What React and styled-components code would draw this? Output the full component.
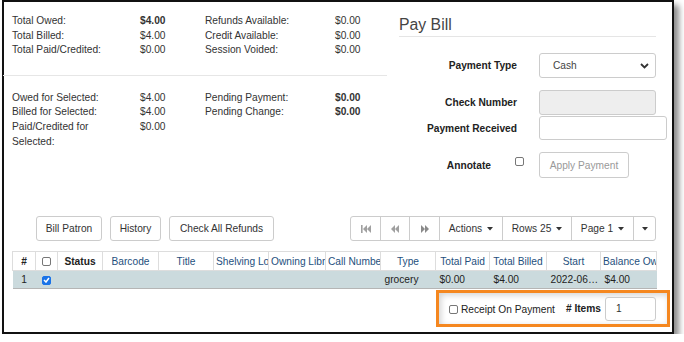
import styled, { createGlobalStyle } from "styled-components";

const GlobalStyle = createGlobalStyle`
  * {
    box-sizing: border-box;
  }
  body {
    margin: 0;
    background: #fff;
    font-family: "Liberation Sans", Arial, sans-serif;
    font-size: 10.2px;
    color: #333;
  }
`;

const Frame = styled.div`
  width: 672px;
  height: 334px;
  margin-left: 2px;
  border: 2px solid #111;
  box-shadow: 5px 5px 6px rgba(0, 0, 0, 0.45);
  background: #fff;
  overflow: visible;
`;

const Content = styled.div`
  padding: 0 16px 0 0;
`;

const TopSection = styled.div`
  display: flex;
  align-items: flex-start;
`;

const Summary = styled.div`
  width: 384px;
  padding-top: 12px;
`;

const SummaryGrid = styled.div`
  display: grid;
  grid-template-columns: 128px 65px 130px 1fr;
  padding-left: 8px;
  line-height: 14.6px;
`;

const Label = styled.div`
  padding-right: 10px;
`;

const Value = styled.div`
  font-weight: ${(p) => (p.$bold ? "bold" : "normal")};
`;

const Separator = styled.hr`
  border: 0;
  border-top: 1px solid #e6e6e6;
  margin: 17px 0 15px -1px;
`;

const PayPanel = styled.div`
  width: 257px;
  margin-left: 12px;
  padding-top: 14px;
`;

const PanelTitle = styled.h3`
  margin: 0;
  font-size: 15.8px;
  font-weight: normal;
  line-height: 17.4px;
  color: #444;
  padding-bottom: 3px;
  border-bottom: 1px solid #e5e5e5;
`;

const FormRow = styled.div`
  display: grid;
  grid-template-columns: 118px auto;
  column-gap: 22px;
  align-items: center;
  margin-top: ${(p) => p.$gap}px;
`;

const FormLabel = styled.div`
  font-weight: bold;
  text-align: right;
  color: #222;
`;

const AnnotateLabel = styled.div`
  display: flex;
  justify-content: flex-end;
  align-self: stretch;
  align-items: center;
  gap: 24px;
  margin-right: -7px;
  font-weight: bold;
  color: #222;
`;

const SelectBox = styled.div`
  width: 117px;
  height: 25px;
  display: flex;
  align-items: center;
  justify-content: space-between;
  padding: 0 6px 0 13px;
  border: 1px solid #ccc;
  border-radius: 3px;
  background: #fff;
  color: #444;
`;

const TextInput = styled.div`
  width: ${(p) => p.$w}px;
  height: ${(p) => p.$h}px;
  border: 1px solid #ccc;
  border-radius: 3px;
  background: ${(p) => (p.$disabled ? "#eee" : "#fff")};
  display: flex;
  align-items: center;
  padding-left: 10px;
  color: #555;
`;

const Check = styled.span`
  display: inline-flex;
  align-items: center;
  justify-content: center;
  width: 9px;
  height: 9px;
  flex: none;
  border: 1px solid ${(p) => (p.$checked ? "#1a73e8" : "#777")};
  border-radius: 2px;
  background: ${(p) => (p.$checked ? "#1a73e8" : "#fff")};
  align-self: ${(p) => (p.$top ? "flex-start" : "center")};
  margin-top: ${(p) => (p.$top ? "5px" : "0")};
`;

const Button = styled.button`
  height: ${(p) => p.$h || 25}px;
  padding: 0 ${(p) => p.$pad || 6}px;
  border: 1px solid #ccc;
  border-radius: 3px;
  background: #fff;
  font-family: inherit;
  font-size: 10.2px;
  color: ${(p) => (p.disabled ? "#999" : "#333")};
`;

const Toolbar = styled.div`
  display: flex;
  justify-content: space-between;
  align-items: center;
  margin-top: 38px;
  padding-left: 32px;
`;

const ButtonRow = styled.div`
  display: flex;
  gap: 8px;
`;

const Group = styled.div`
  display: flex;
  height: 25px;
  border: 1px solid #ccc;
  border-radius: 3px;
`;

const Segment = styled.div`
  width: ${(p) => p.$w}px;
  display: flex;
  align-items: center;
  justify-content: center;
  gap: 5px;
  border-left: ${(p) => (p.$first ? "0" : "1px solid #ccc")};
  color: #333;
`;

const Table = styled.table`
  margin: 10px 0 0 8px;
  width: 644px;
  table-layout: fixed;
  border-collapse: collapse;
`;

const Th = styled.th`
  height: 19px;
  padding: 0 2px;
  border: 1px solid #ddd;
  text-align: center;
  white-space: nowrap;
  overflow: hidden;
  font-weight: ${(p) => (p.$strong ? "bold" : "normal")};
  color: ${(p) => (p.$strong ? "#222" : "#25507d")};
`;

const DataRow = styled.tr`
  background: #cbdadd;
  border-bottom: 1px solid #b5b5b5;
`;

const Td = styled.td`
  height: 18px;
  padding: ${(p) => (p.$center ? "0" : "0 1px 0 4px")};
  text-align: ${(p) => (p.$center ? "center" : "left")};
  white-space: nowrap;
  overflow: hidden;
  text-overflow: ellipsis;
  color: #222;
`;

const Footer = styled.div`
  display: flex;
  justify-content: flex-end;
  margin: 1px -14px 0 0;
`;

const Highlight = styled.div`
  display: flex;
  align-items: center;
  height: 37px;
  padding: 0 11px 0 10px;
  border: 3px solid #f5871f;
  box-shadow: inset 2px 2px 6px rgba(0, 0, 0, 0.18);
`;

const CheckLabel = styled.label`
  display: flex;
  align-items: center;
  gap: 3px;
  margin-top: 2px;
  color: #222;
`;

const ItemsLabel = styled.span`
  font-weight: bold;
  margin: 0 4px 0 11px;
  color: #222;
`;

const ItemsInput = styled(TextInput)`
  padding-left: 10px;
  color: #333;
`;

const Caret = () => (
  <svg width="6" height="4" viewBox="0 0 6 4">
    <polygon points="0,0 6,0 3,3.5" fill="#333" />
  </svg>
);

const Chevron = () => (
  <svg width="9" height="6" viewBox="0 0 9 6">
    <path d="M1 1 L4.5 4.5 L8 1" stroke="#333" strokeWidth="1.8" fill="none" />
  </svg>
);

const Tick = () => (
  <svg width="7" height="6" viewBox="0 0 7 6">
    <path d="M1 3 L3 5 L6 1" stroke="#fff" strokeWidth="1.5" fill="none" />
  </svg>
);

const PagerIcon = ({ kind, color }) => (
  <svg width="10" height="8" viewBox="0 0 10 8">
    {kind === "first" && (
      <>
        <rect x="0" y="0" width="1.6" height="8" fill={color} />
        <polygon points="6,0 2,4 6,8" fill={color} />
        <polygon points="10,0 6,4 10,8" fill={color} />
      </>
    )}
    {kind === "prev" && (
      <>
        <polygon points="5,0 1,4 5,8" fill={color} />
        <polygon points="9,0 5,4 9,8" fill={color} />
      </>
    )}
    {kind === "next" && (
      <>
        <polygon points="1,0 5,4 1,8" fill={color} />
        <polygon points="5,0 9,4 5,8" fill={color} />
      </>
    )}
  </svg>
);

const totals = [
  ["Total Owed:", "$4.00", true, "Refunds Available:", "$0.00", false],
  ["Total Billed:", "$4.00", false, "Credit Available:", "$0.00", false],
  ["Total Paid/Credited:", "$0.00", false, "Session Voided:", "$0.00", false],
];

const selected = [
  ["Owed for Selected:", "$4.00", false, "Pending Payment:", "$0.00", true],
  ["Billed for Selected:", "$4.00", false, "Pending Change:", "$0.00", true],
  ["Paid/Credited for Selected:", "$0.00", false, "", "", false],
];

const columns = [
  { name: "#", w: 23, strong: true },
  { name: "check", w: 22 },
  { name: "Status", w: 45, strong: true },
  { name: "Barcode", w: 56 },
  { name: "Title", w: 55 },
  { name: "Shelving Location", w: 55 },
  { name: "Owning Library", w: 57 },
  { name: "Call Number", w: 55 },
  { name: "Type", w: 55 },
  { name: "Total Paid", w: 54 },
  { name: "Total Billed", w: 57 },
  { name: "Start", w: 54 },
  { name: "Balance Owed", w: 56 },
];

const SummaryBlock = ({ rows }) => (
  <SummaryGrid>
    {rows.map(([l1, v1, b1, l2, v2, b2]) => (
      <>
        <Label key={l1}>{l1}</Label>
        <Value $bold={b1}>{v1}</Value>
        <Label>{l2}</Label>
        <Value $bold={b2}>{v2}</Value>
      </>
    ))}
  </SummaryGrid>
);

export default function App() {
  return (
    <>
      <GlobalStyle />
      <Frame>
        <Content>
          <TopSection>
            <Summary>
              <SummaryBlock rows={totals} />
              <Separator />
              <SummaryBlock rows={selected} />
            </Summary>
            <PayPanel>
              <PanelTitle>Pay Bill</PanelTitle>
              <FormRow $gap={15.6}>
                <FormLabel>Payment Type</FormLabel>
                <SelectBox>
                  Cash
                  <Chevron />
                </SelectBox>
              </FormRow>
              <FormRow $gap={12}>
                <FormLabel>Check Number</FormLabel>
                <TextInput $w={117} $h={25} $disabled />
              </FormRow>
              <FormRow $gap={1}>
                <FormLabel>Payment Received</FormLabel>
                <TextInput $w={128} $h={24} />
              </FormRow>
              <FormRow $gap={12}>
                <AnnotateLabel>
                  Annotate
                  <Check $top />
                </AnnotateLabel>
                <Button $h={26} $pad={6} disabled style={{ width: 90 }}>
                  Apply Payment
                </Button>
              </FormRow>
            </PayPanel>
          </TopSection>

          <Toolbar>
            <ButtonRow>
              <Button style={{ width: 66 }}>Bill Patron</Button>
              <Button style={{ width: 51 }}>History</Button>
              <Button style={{ width: 105 }}>Check All Refunds</Button>
            </ButtonRow>
            <Group>
              <Segment $w={29} $first>
                <PagerIcon kind="first" color="#a0a0a0" />
              </Segment>
              <Segment $w={29}>
                <PagerIcon kind="prev" color="#a0a0a0" />
              </Segment>
              <Segment $w={30}>
                <PagerIcon kind="next" color="#8a8a8a" />
              </Segment>
              <Segment $w={63}>
                Actions <Caret />
              </Segment>
              <Segment $w={69}>
                Rows 25 <Caret />
              </Segment>
              <Segment $w={62}>
                Page 1 <Caret />
              </Segment>
              <Segment $w={22}>
                <Caret />
              </Segment>
            </Group>
          </Toolbar>

          <Table>
            <colgroup>
              {columns.map((c) => (
                <col key={c.name} style={{ width: c.w }} />
              ))}
            </colgroup>
            <thead>
              <tr>
                {columns.map((c) => (
                  <Th key={c.name} $strong={c.strong}>
                    {c.name === "check" ? (
                      <Check style={{ verticalAlign: "middle" }} />
                    ) : (
                      c.name
                    )}
                  </Th>
                ))}
              </tr>
            </thead>
            <tbody>
              <DataRow>
                <Td $center>1</Td>
                <Td $center>
                  <Check $checked style={{ verticalAlign: "middle" }}>
                    <Tick />
                  </Check>
                </Td>
                <Td />
                <Td />
                <Td />
                <Td />
                <Td />
                <Td />
                <Td>grocery</Td>
                <Td>$0.00</Td>
                <Td>$4.00</Td>
                <Td>2022-06-15</Td>
                <Td>$4.00</Td>
              </DataRow>
            </tbody>
          </Table>

          <Footer>
            <Highlight>
              <CheckLabel>
                <Check />
                Receipt On Payment
              </CheckLabel>
              <ItemsLabel># Items</ItemsLabel>
              <ItemsInput $w={51} $h={24}>
                1
              </ItemsInput>
            </Highlight>
          </Footer>
        </Content>
      </Frame>
    </>
  );
}
